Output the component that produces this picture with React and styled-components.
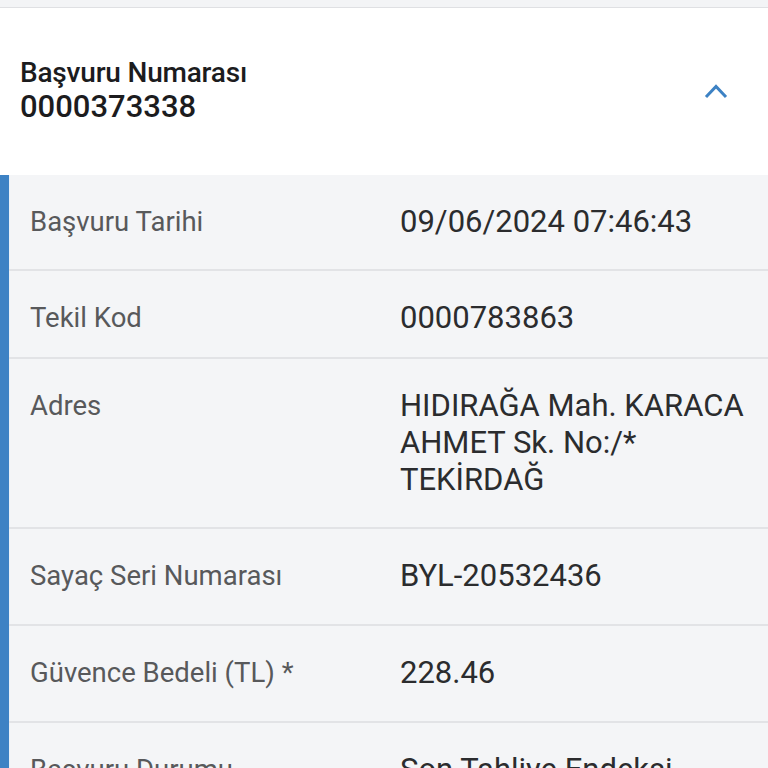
import React from 'react';
import styled, { createGlobalStyle } from 'styled-components';

const GlobalStyle = createGlobalStyle`
  html, body {
    margin: 0;
    padding: 0;
    background: #f4f5f7;
  }
  body {
    font-family: Roboto, "Noto Sans", Arial, sans-serif;
    -webkit-font-smoothing: antialiased;
  }
`;

const colors = {
  blue: '#3d82c4',
  page: '#f4f5f7',
  line: '#e2e3e6',
  label: '#58595b',
  value: '#2b2c2e',
  title: '#1c1c1e',
};

const Page = styled.div`
  width: 768px;
  min-height: 768px;
  overflow: hidden;
  background: ${colors.page};
`;

const TopStrip = styled.div`
  height: 7px;
  background: #f3f4f6;
  border-bottom: 1px solid #dfe0e3;
`;

const Header = styled.div`
  display: flex;
  align-items: flex-start;
  justify-content: space-between;
  height: 167px;
  padding: 48px 38px 0 20px;
  box-sizing: border-box;
  background: #fff;
`;

const HeaderText = styled.div`
  display: flex;
  flex-direction: column;
`;

const HeaderTitle = styled.div`
  font-size: 28px;
  font-weight: 500;
  line-height: 33px;
  letter-spacing: -0.2px;
  color: ${colors.title};
`;

const HeaderNumber = styled.div`
  font-size: 31px;
  font-weight: 500;
  line-height: 36px;
  color: ${colors.title};
`;

const Chevron = styled.svg`
  width: 28px;
  height: 28px;
  margin-top: 21px;
  color: ${colors.blue};
`;

const Details = styled.div`
  border-left: 9px solid ${colors.blue};
  background: ${colors.page};
`;

const Row = styled.div`
  display: grid;
  grid-template-columns: 370px 1fr;
  padding: 28px 20px ${p => p.$bottom || 30}px 21px;
  border-bottom: 2px solid ${colors.line};
  box-shadow: inset 1px 0 0 #e9f1f9;
`;

const Label = styled.div`
  font-size: 27.5px;
  line-height: 37px;
  color: ${colors.label};
`;

const Value = styled.div`
  font-size: 31px;
  line-height: 37px;
  color: ${colors.value};
`;

const rows = [
  { label: 'Başvuru Tarihi', value: '09/06/2024 07:46:43', bottom: 29 },
  { label: 'Tekil Kod', value: '0000783863', bottom: 21 },
  { label: 'Adres', value: ['HIDIRAĞA Mah. KARACA', 'AHMET Sk. No:/*', 'TEKİRDAĞ'], bottom: 29 },
  { label: 'Sayaç Seri Numarası', value: 'BYL-20532436' },
  { label: 'Güvence Bedeli (TL) *', value: '228.46' },
  { label: 'Başvuru Durumu', value: 'Son Tahliye Endeksi' },
];

export default function App() {
  return (
    <Page>
      <GlobalStyle />
      <TopStrip />
      <Header>
        <HeaderText>
          <HeaderTitle>Başvuru Numarası</HeaderTitle>
          <HeaderNumber>0000373338</HeaderNumber>
        </HeaderText>
        <Chevron viewBox="0 0 28 28" fill="none" stroke="currentColor" strokeWidth="3">
          <path d="M4 20 L14 9.5 L24 20" />
        </Chevron>
      </Header>
      <Details>
        {rows.map(r => (
          <Row key={r.label} $bottom={r.bottom}>
            <Label>{r.label}</Label>
            <Value>
              {Array.isArray(r.value)
                ? r.value.map(line => <div key={line}>{line}</div>)
                : r.value}
            </Value>
          </Row>
        ))}
      </Details>
    </Page>
  );
}
